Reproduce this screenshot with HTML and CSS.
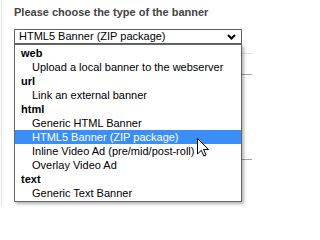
FILE: index.html
```html
<!DOCTYPE html>
<html>
<head>
<meta charset="utf-8">
<link rel="stylesheet" href="styles.css">
</head>
<body>
<div class="page">
  <div class="frame">
    <div class="label">Please choose the type of the banner</div>
    <div class="select">
      <span class="select-text">HTML5 Banner (ZIP package)</span>
      <svg class="chevron" width="9" height="6" viewBox="0 0 9 6"><polyline points="1,1 4.5,4.5 8,1" fill="none" stroke="#000" stroke-width="2"/></svg>
    </div>
    <div class="side">
      <div class="row r1"></div>
      <div class="row r2"></div>
      <div class="row r3"></div>
    </div>
  </div>
  <div class="dropdown">
    <div class="group">web</div>
    <div class="opt">Upload a local banner to the webserver</div>
    <div class="group">url</div>
    <div class="opt">Link an external banner</div>
    <div class="group">html</div>
    <div class="opt">Generic HTML Banner</div>
    <div class="opt selected">HTML5 Banner (ZIP package)</div>
    <div class="opt">Inline Video Ad (pre/mid/post-roll)</div>
    <div class="opt">Overlay Video Ad</div>
    <div class="group">text</div>
    <div class="opt">Generic Text Banner</div>
  </div>
  <svg class="cursor" width="13" height="19" viewBox="0 0 13 19"><path d="M0.5 0.5 L0.5 16 L4.3 12.3 L6.8 18 L9 17 L6.6 11.4 L11.5 11.4 Z" fill="#fff" stroke="#000" stroke-width="1" stroke-linejoin="miter"/></svg>
</div>
</body>
</html>
```
FILE: styles.css
```css
html, body {
  margin: 0;
  padding: 0;
  background: #fff;
}
body {
  font-family: "Liberation Sans", Arial, sans-serif;
  font-size: 11px;
  width: 252px;
  height: 212px;
  overflow: hidden;
}
.page {
  position: relative;
  width: 252px;
  height: 212px;
}
.frame {
  margin-left: 1px;
  border-left: 1px solid #e2e2e2;
  padding-left: 12px;
  height: 206px;
}
.label {
  padding-top: 6px;
  line-height: 13px;
  font-weight: bold;
  color: #444;
}
.select {
  margin-top: 10px;
  width: 228px;
  height: 15px;
  box-sizing: border-box;
  border: 1px solid #5f5f5f;
  display: flex;
  align-items: center;
  justify-content: space-between;
  padding: 0 5px 0 4px;
  line-height: 13px;
  color: #000;
}
.chevron {
  display: block;
}
.side {
  margin-left: 225px;
}
.row {
  border-bottom: 1px solid #a3a3a3;
}
.r1 {
  height: 9px;
  border-bottom-color: #e4e4e4;
}
.r2 {
  height: 20px;
}
.r3 {
  height: 84px;
}
.dropdown {
  position: absolute;
  top: 44px;
  left: 14px;
  width: 228px;
  box-sizing: border-box;
  border: 1px solid #666;
  background: #fff;
  padding: 1px 0;
  box-shadow: 2px 2px 3px rgba(0, 0, 0, 0.3);
}
.group, .opt {
  height: 14px;
  line-height: 14px;
  color: #000;
  white-space: nowrap;
}
.group {
  font-weight: bold;
  padding-left: 6px;
}
.opt {
  padding-left: 17px;
}
.opt.selected {
  background: #3a8ef6;
  color: #fff;
}
.cursor {
  position: absolute;
  left: 197px;
  top: 138px;
}
```
